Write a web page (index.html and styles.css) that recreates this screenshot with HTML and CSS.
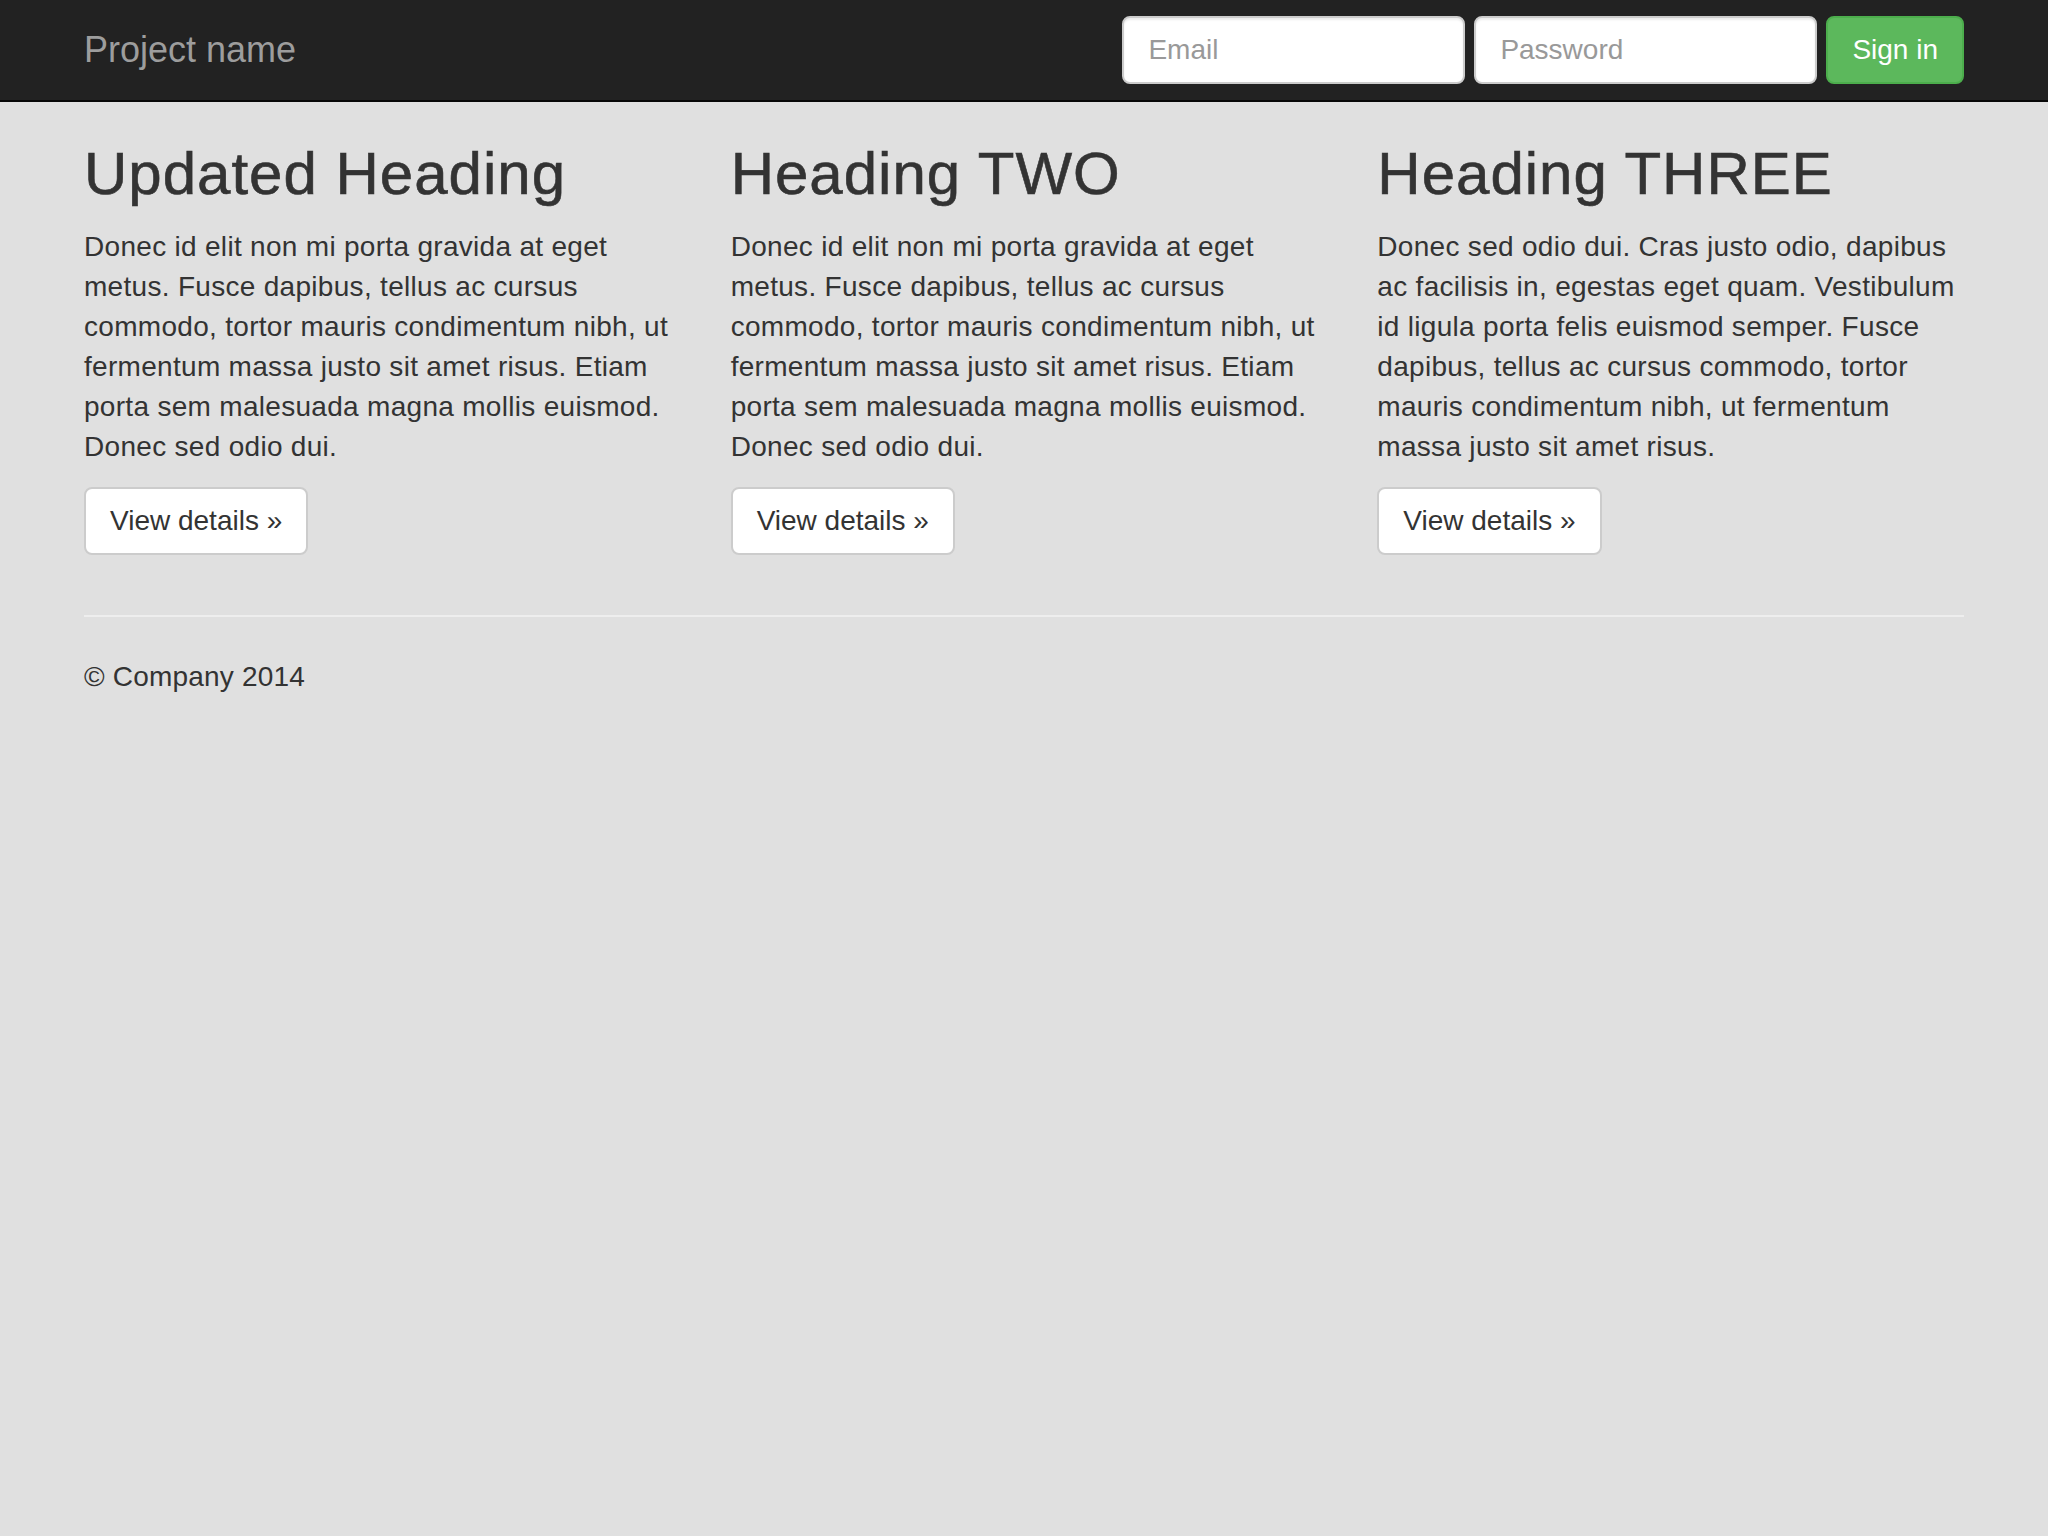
FILE: index.html
```html
<!DOCTYPE html>
<html lang="en">
<head>
<meta charset="utf-8">
<title>Project name</title>
<link rel="stylesheet" href="styles.css">
</head>
<body>
<nav class="navbar">
  <div class="container navbar-inner">
    <a class="brand" href="#">Project name</a>
    <form class="signin">
      <input class="field" type="text" placeholder="Email">
      <input class="field" type="password" placeholder="Password">
      <button class="btn btn-success" type="button">Sign in</button>
    </form>
  </div>
</nav>
<main class="container">
  <div class="row">
    <div class="col">
      <h2>Updated Heading</h2>
      <p>Donec id elit non mi porta gravida at eget metus. Fusce dapibus, tellus ac cursus commodo, tortor mauris condimentum nibh, ut fermentum massa justo sit amet risus. Etiam porta sem malesuada magna mollis euismod. Donec sed odio dui.</p>
      <p><a class="btn btn-default" href="#">View details »</a></p>
    </div>
    <div class="col">
      <h2>Heading TWO</h2>
      <p>Donec id elit non mi porta gravida at eget metus. Fusce dapibus, tellus ac cursus commodo, tortor mauris condimentum nibh, ut fermentum massa justo sit amet risus. Etiam porta sem malesuada magna mollis euismod. Donec sed odio dui.</p>
      <p><a class="btn btn-default" href="#">View details »</a></p>
    </div>
    <div class="col">
      <h2>Heading THREE</h2>
      <p>Donec sed odio dui. Cras justo odio, dapibus ac facilisis in, egestas eget quam. Vestibulum id ligula porta felis euismod semper. Fusce dapibus, tellus ac cursus commodo, tortor mauris condimentum nibh, ut fermentum massa justo sit amet risus.</p>
      <p><a class="btn btn-default" href="#">View details »</a></p>
    </div>
  </div>
  <hr class="rule">
  <footer class="footer">
    <p>© Company 2014</p>
  </footer>
</main>
</body>
</html>
```
FILE: styles.css
```css
* { box-sizing: border-box; }
html, body { margin: 0; padding: 0; }
body {
  background: #e0e0e0;
  color: #333;
  font-family: "Liberation Sans", Arial, sans-serif;
  font-size: 28px;
  line-height: 40px;
  min-height: 1536px;
}
.container {
  width: 1940px;
  margin: 0 auto;
  padding: 0 30px;
}
.navbar {
  background: #222;
  border-bottom: 2px solid #080808;
  height: 102px;
}
.navbar-inner {
  display: flex;
  align-items: flex-start;
  justify-content: space-between;
  height: 100px;
}
.brand {
  color: #9d9d9d;
  font-size: 36px;
  line-height: 40px;
  padding: 30px 0;
  text-decoration: none;
}
.signin {
  display: flex;
  gap: 9px;
  margin-top: 16px;
}
.field {
  width: 343px;
  height: 68px;
  padding: 12px 24px;
  font-family: inherit;
  font-size: 28px;
  line-height: 40px;
  color: #555;
  background: #fff;
  border: 2px solid #ccc;
  border-radius: 8px;
  box-shadow: inset 0 2px 2px rgba(0,0,0,.075);
  outline: none;
}
.field::placeholder { color: #999; }
.btn {
  display: inline-block;
  height: 68px;
  padding: 12px 24px;
  font-family: inherit;
  font-size: 28px;
  line-height: 40px;
  border: 2px solid transparent;
  border-radius: 8px;
  text-decoration: none;
  cursor: pointer;
}
.btn-success {
  background: #5cb85c;
  border-color: #4cae4c;
  color: #fff;
}
.btn-default {
  background: #fff;
  border-color: #ccc;
  color: #333;
}
.row {
  display: flex;
  margin: 0 -30px;
}
.col {
  width: 33.3333%;
  padding: 0 30px;
}
.col p { letter-spacing: 0.3px; }
.col p .btn { letter-spacing: 0; }
h2 {
  font-size: 60px;
  font-weight: 500;
  line-height: 66px;
  letter-spacing: 1px;
  -webkit-text-stroke: 0.6px #333;
  margin: 39px 0 20px;
}
p { margin: 0 0 20px; }
.rule {
  border: 0;
  border-top: 2px solid #eee;
  margin: 40px 0;
}
.footer p { letter-spacing: 0.2px; }
```
